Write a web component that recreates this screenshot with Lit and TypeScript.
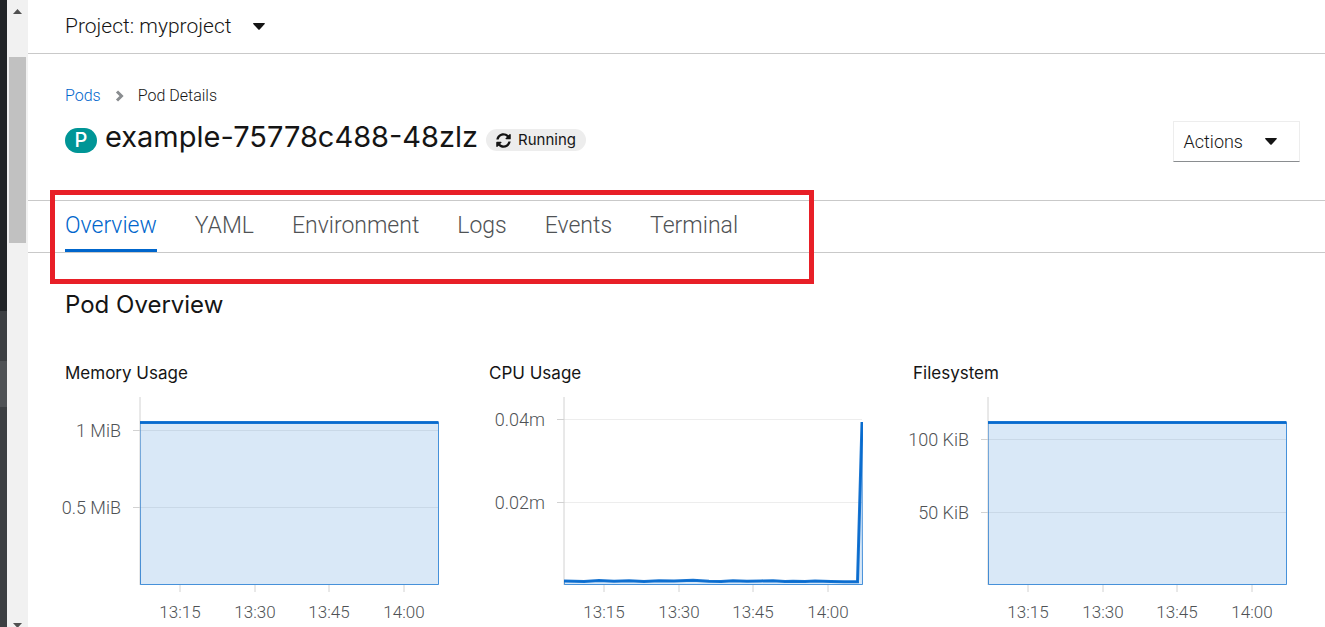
import { LitElement, html, svg, css } from "lit";
import { customElement, property } from "lit/decorators.js";

interface Tick {
  at: number;
  label: string;
}

const TIME_TICKS: Tick[] = [
  { at: 115, label: "13:15" },
  { at: 190, label: "13:30" },
  { at: 264, label: "13:45" },
  { at: 339, label: "14:00" },
];

const FLAT = "75,25.5 373.5,25.5";
const SPIKE =
  "75,184 95,184.4 110,183.5 125,184.2 140,183.7 155,184.4 170,183.7 185,184.1 204,183.3 220,184.3 232,184.5 244,183.8 258,184.3 272,183.9 284,183.7 296,184.5 304,184.2 316,184.5 326,184 342,184.4 355,184.8 368.5,184.8 373,25";

@customElement("usage-chart")
class UsageChart extends LitElement {
  @property() heading = "";
  @property() line = FLAT;
  @property({ attribute: false }) ticks: Tick[] = [];

  static styles = css`
    :host {
      display: block;
      min-width: 0;
    }
    .heading {
      margin: 0;
      font: 400 17px/24px Inter, sans-serif;
      color: #151515;
    }
    .plot {
      display: block;
      width: 100%;
      margin-top: 12px;
      overflow: visible;
    }
    .label {
      font: 300 18px Roboto, sans-serif;
      fill: #4f5255;
    }
    .time {
      font-size: 17px;
    }
    .axis {
      stroke: #d2d2d2;
      stroke-width: 1;
    }
    .grid {
      stroke: #ededed;
      stroke-width: 1;
    }
    .area {
      fill: #06c;
      fill-opacity: 0.15;
      stroke: #06c;
      stroke-opacity: 0.7;
      stroke-width: 1;
    }
    .line {
      fill: none;
      stroke: #06c;
      stroke-width: 3;
      stroke-opacity: 0.9;
    }
  `;

  render() {
    return html`
      <h3 class="heading">${this.heading}</h3>
      <svg class="plot" viewBox="0 0 387 230" role="img" aria-label=${this.heading}>
        <clipPath id="plot-area"><rect x="75" y="0" width="299" height="189" /></clipPath>
        ${this.ticks.map(
          (t) => svg`
            <path class="grid" d="M75 ${t.at + 0.5}H373" />
            <path class="axis" d="M68 ${t.at + 0.5}H75" />
            <text class="label" x="56" y=${t.at + 7} text-anchor="end">${t.label}</text>`
        )}
        ${TIME_TICKS.map(
          (t) => svg`
            <path class="axis" d="M${t.at} 188V195" />
            <text class="label time" x=${t.at} y="221" text-anchor="middle">${t.label}</text>`
        )}
        <path class="axis" d="M75 0V188" />
        <g clip-path="url(#plot-area)">
          <polygon class="area" points="75.5,187.5 ${this.line} 373.5,187.5" />
          <polyline class="line" points=${this.line} />
        </g>
      </svg>
    `;
  }
}

const TABS = ["Overview", "YAML", "Environment", "Logs", "Events", "Terminal"];

@customElement("app-root")
class AppRoot extends LitElement {
  static styles = css`
    :host {
      display: flex;
      height: 100vh;
      overflow: hidden;
      background: #fff;
      color: #151515;
      font: 300 16px/24px Roboto, sans-serif;
    }
    .sidebar {
      flex: 0 0 7px;
      display: flex;
      flex-direction: column;
      background: #3c3f42;
    }
    .sidebar-top {
      height: 311px;
      background: #212427;
    }
    .sidebar-item {
      height: 46px;
      margin-top: 50px;
      background: #4f5255;
    }
    .scrollbar {
      flex: 0 0 21px;
      display: flex;
      flex-direction: column;
      align-items: center;
      background: #f1f1f1;
    }
    .arrow {
      display: block;
      width: 9px;
      height: 5px;
      fill: #505050;
    }
    .arrow-up {
      margin-top: 9px;
    }
    .arrow-down {
      margin-top: auto;
      margin-bottom: -1px;
    }
    .thumb {
      width: 17px;
      height: 186px;
      margin-top: 43px;
      background: #c1c1c1;
    }
    .main {
      flex: 1;
      min-width: 0;
      overflow: hidden;
    }
    .project-bar {
      padding: 12px 25px 13px 37px;
      border-bottom: 1px solid #c9c9c9;
    }
    button {
      display: flex;
      align-items: center;
      padding: 0;
      border: 0;
      background: none;
      color: inherit;
      font: inherit;
    }
    .project {
      gap: 22px;
      font-size: 21px;
      line-height: 28px;
    }
    .caret {
      display: block;
      width: 12px;
      height: 7px;
      fill: #151515;
    }
    .header {
      padding: 30px 25px 38px 37px;
    }
    .crumbs {
      display: flex;
      align-items: center;
      gap: 14px;
    }
    .crumbs a {
      color: #06c;
      text-decoration: none;
    }
    .chevron {
      display: block;
      width: 9px;
      height: 12px;
      fill: none;
      stroke: #8a8d90;
      stroke-width: 3;
    }
    .title-row {
      display: flex;
      align-items: center;
      margin-top: 13px;
    }
    .title {
      display: flex;
      align-items: center;
      gap: 8px;
      margin: 0 auto 0 0;
      padding-bottom: 3px;
      font: 400 29px/32px Inter, sans-serif;
    }
    .name {
      padding-bottom: 6px;
    }
    .kind {
      width: 32px;
      border-radius: 13px;
      background: #009596;
      color: #fff;
      font-size: 20px;
      font-weight: 500;
      line-height: 25px;
      text-align: center;
    }
    .status {
      display: flex;
      align-items: center;
      gap: 7px;
      padding: 0 10px;
      border-radius: 11px;
      background: #ededed;
      font-size: 15px;
      line-height: 22px;
    }
    .sync {
      width: 15px;
      height: 15px;
      fill: #151515;
    }
    .actions {
      gap: 22px;
      padding: 0 22px 0 10px;
      border: 1px solid #ededed;
      border-bottom-color: #8a8d90;
      font-size: 18px;
      line-height: 39px;
    }
    .tabs {
      display: flex;
      position: relative;
      gap: 38px;
      padding: 0 37px;
      border: 1px solid #c9c9c9;
      border-width: 1px 0;
    }
    .tab {
      padding-top: 2px;
      border-bottom: 3px solid transparent;
      color: #4f5255;
      font-size: 23px;
      line-height: 46px;
      text-decoration: none;
    }
    .tab.current {
      border-color: #06c;
      color: #06c;
    }
    .highlight {
      position: absolute;
      top: -11px;
      left: 22px;
      width: 764px;
      height: 94px;
      box-sizing: border-box;
      border: 5px solid #e81f27;
      pointer-events: none;
    }
    .overview {
      padding: 36px 25px 0 37px;
    }
    .section-title {
      margin: 0;
      font: 400 24px/32px Inter, sans-serif;
    }
    .charts {
      display: grid;
      grid-template-columns: repeat(3, minmax(0, 1fr));
      gap: 37px;
      margin-top: 40px;
    }
  `;

  private caret = html`<svg class="caret" viewBox="0 0 12 7" aria-hidden="true">
    <path d="M0 .8Q0 0 .8 0H11.2Q12 0 11.9.8L6.7 6.4Q6 7 5.3 6.4Z" />
  </svg>`;

  render() {
    return html`
      <div class="sidebar">
        <div class="sidebar-top"></div>
        <div class="sidebar-item"></div>
      </div>
      <div class="scrollbar">
        <svg class="arrow arrow-up" viewBox="0 0 9 5"><path d="M0 5 4.5 0 9 5Z" /></svg>
        <div class="thumb"></div>
        <svg class="arrow arrow-down" viewBox="0 0 9 5"><path d="M0 0H9L4.5 5Z" /></svg>
      </div>
      <main class="main">
        <div class="project-bar">
          <button class="project" type="button">Project: myproject ${this.caret}</button>
        </div>
        <header class="header">
          <nav class="crumbs" aria-label="Breadcrumb">
            <a href="#pods">Pods</a>
            <svg class="chevron" viewBox="0 0 9 12" aria-hidden="true">
              <path d="M2 1.5 6.5 6 2 10.5" />
            </svg>
            <span>Pod Details</span>
          </nav>
          <div class="title-row">
            <h1 class="title">
              <span class="kind">P</span>
              <span class="name">example-75778c488-48zlz</span>
              <span class="status">
                <svg class="sync" viewBox="0 0 512 512" aria-hidden="true">
                  <path
                    d="M370.72 133.28C339.458 104.008 298.888 87.962 255.848 88c-77.458.068-144.328 53.178-162.791 126.85-1.344 5.363-6.122 9.15-11.651 9.15H24.103c-7.498 0-13.194-6.807-11.807-14.176C33.933 94.924 134.813 8 256 8c66.448 0 126.791 26.136 171.315 68.685L463.03 40.97C478.149 25.851 504 36.559 504 57.941V192c0 13.255-10.745 24-24 24H345.941c-21.382 0-32.09-25.851-16.971-40.971l41.75-41.749zM32 296h134.059c21.382 0 32.09 25.851 16.971 40.971l-41.75 41.75c31.262 29.273 71.835 45.319 114.876 45.28 77.418-.07 144.315-53.144 162.787-126.849 1.344-5.363 6.122-9.15 11.651-9.15h57.304c7.498 0 13.194 6.807 11.807 14.176C478.067 417.076 377.187 504 256 504c-66.448 0-126.791-26.136-171.315-68.685L48.97 471.03C33.851 486.149 8 475.441 8 454.059V320c0-13.255 10.745-24 24-24z"
                  />
                </svg>
                Running
              </span>
            </h1>
            <button class="actions" type="button">Actions ${this.caret}</button>
          </div>
        </header>
        <nav class="tabs" aria-label="Pod sections">
          ${TABS.map(
            (name, i) =>
              html`<a class=${i === 0 ? "tab current" : "tab"} href="#${name.toLowerCase()}">${name}</a>`
          )}
          <div class="highlight"></div>
        </nav>
        <section class="overview">
          <h2 class="section-title">Pod Overview</h2>
          <div class="charts">
            <usage-chart
              heading="Memory Usage"
              .ticks=${[
                { at: 33, label: "1 MiB" },
                { at: 110, label: "0.5 MiB" },
              ]}
            ></usage-chart>
            <usage-chart
              heading="CPU Usage"
              .line=${SPIKE}
              .ticks=${[
                { at: 22, label: "0.04m" },
                { at: 105, label: "0.02m" },
              ]}
            ></usage-chart>
            <usage-chart
              heading="Filesystem"
              .ticks=${[
                { at: 42, label: "100 KiB" },
                { at: 115, label: "50 KiB" },
              ]}
            ></usage-chart>
          </div>
        </section>
      </main>
    `;
  }
}
